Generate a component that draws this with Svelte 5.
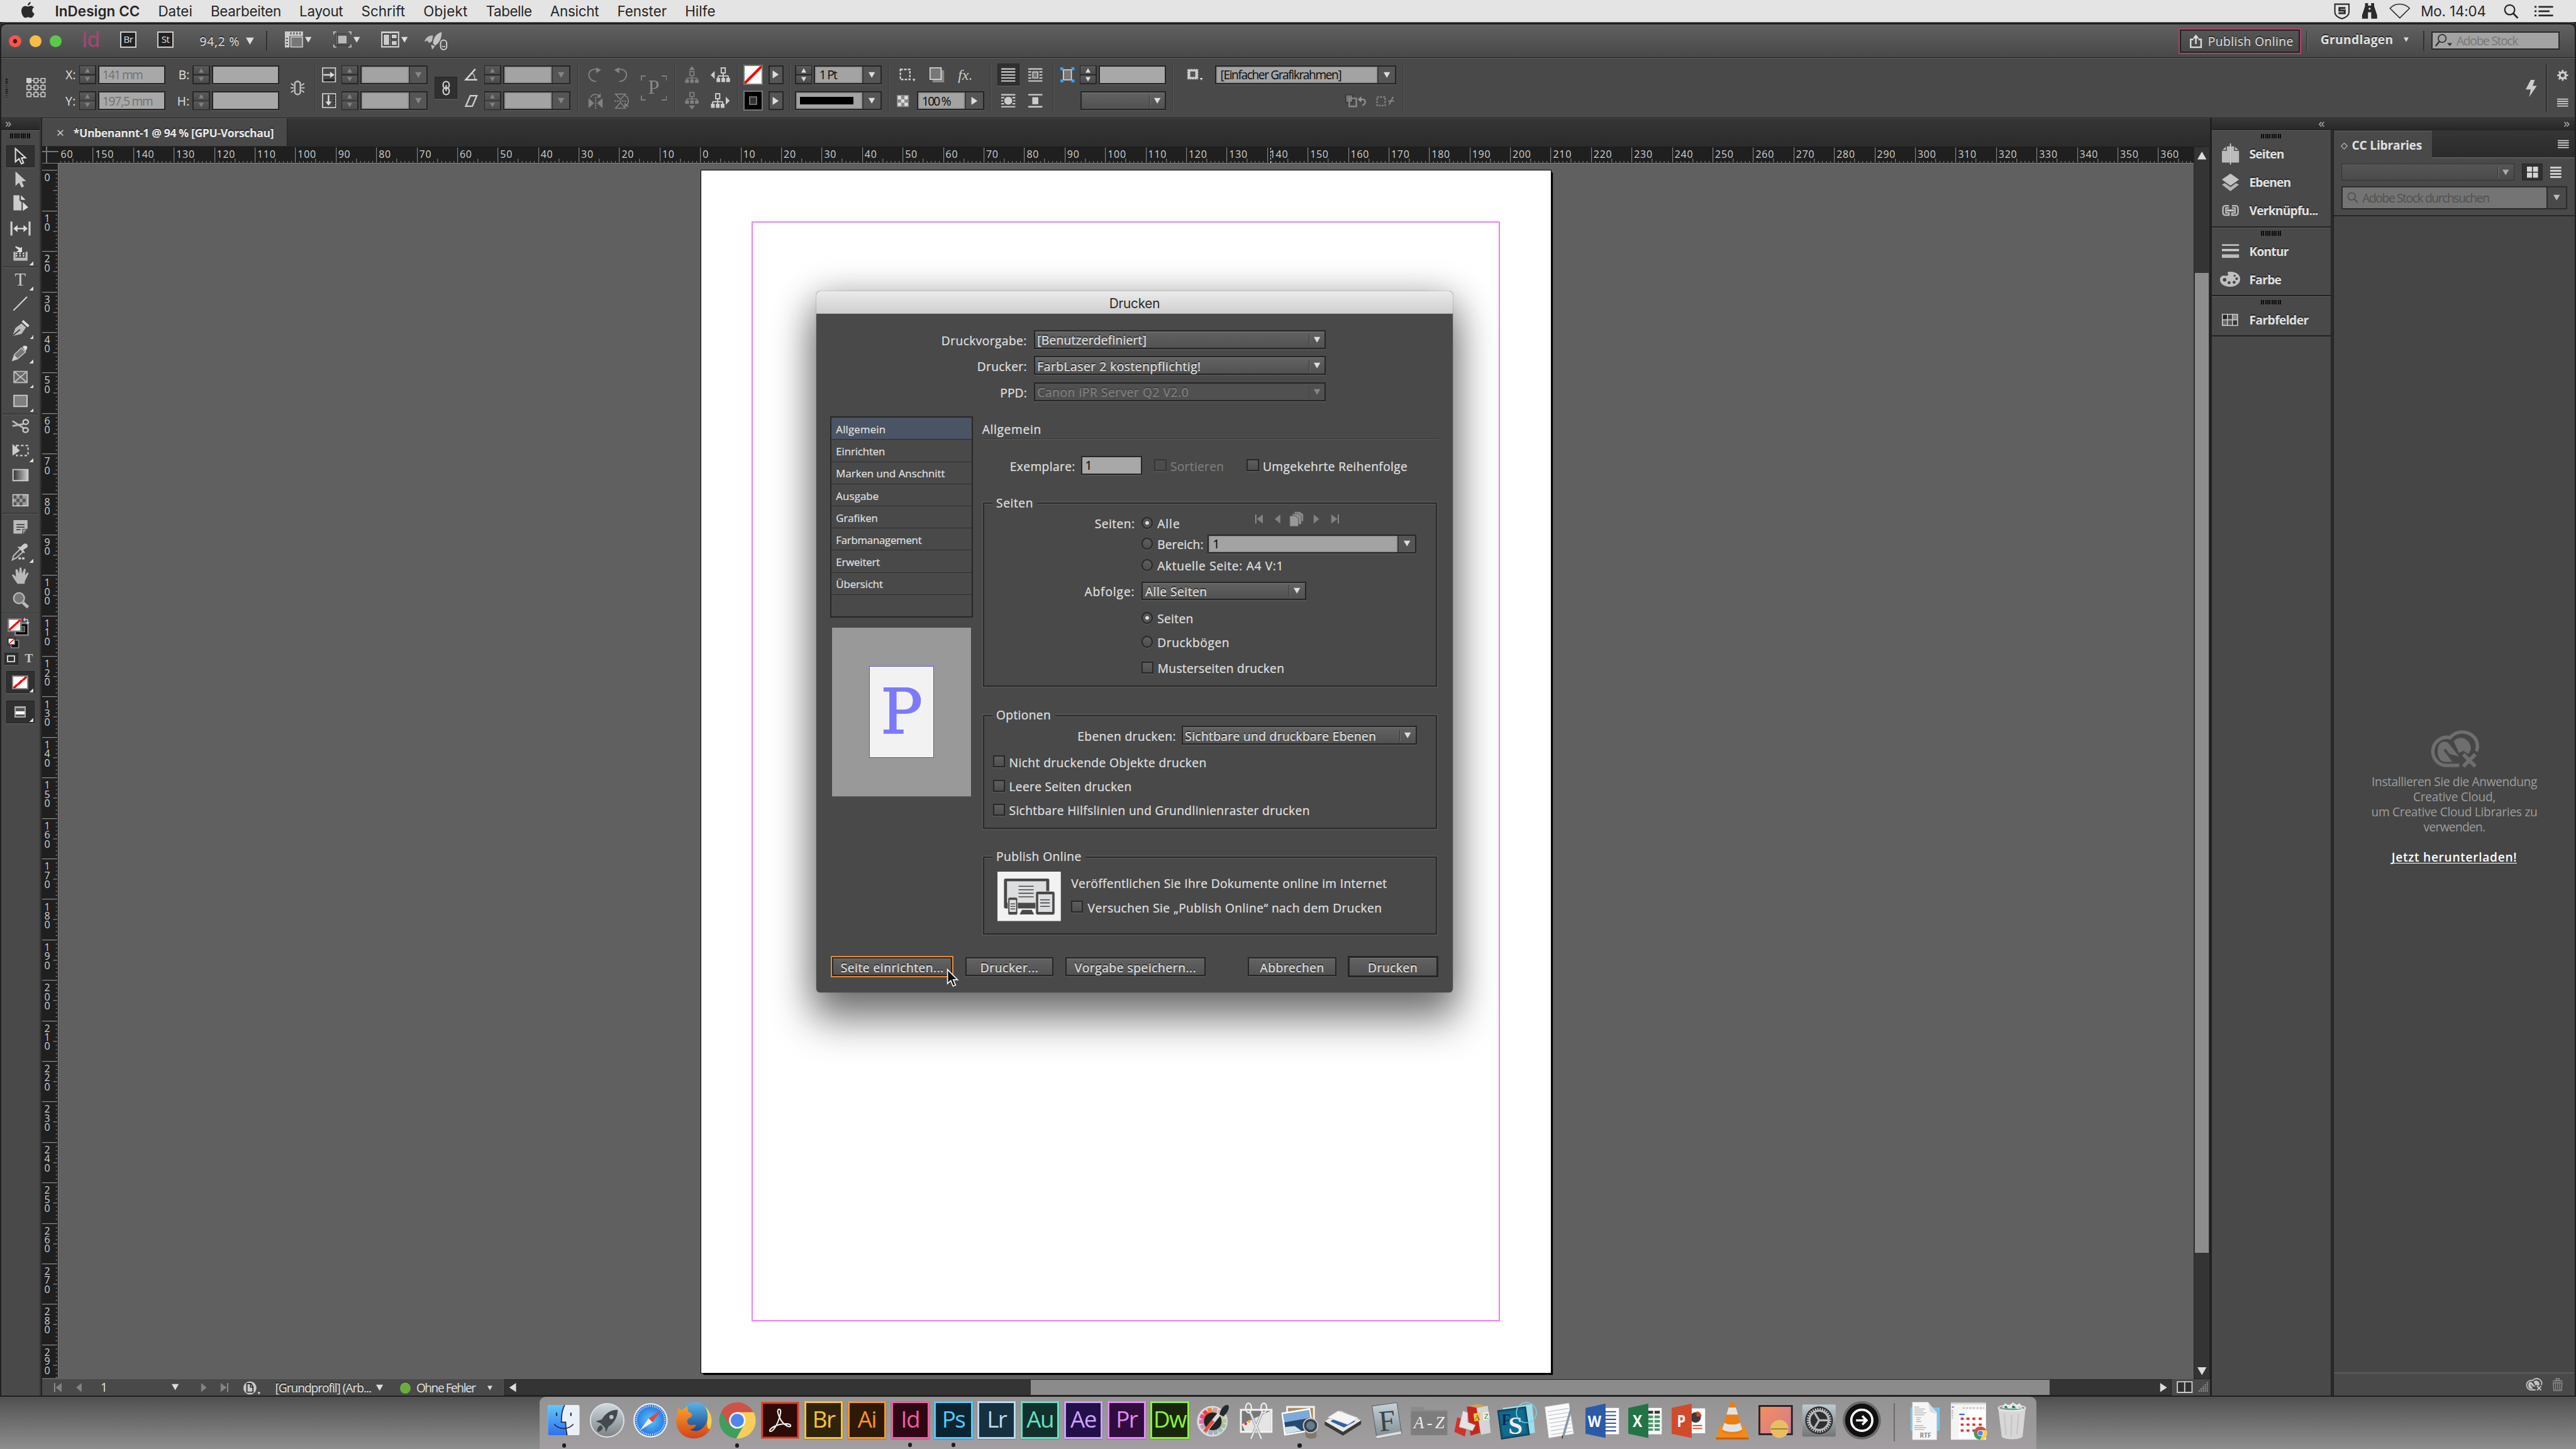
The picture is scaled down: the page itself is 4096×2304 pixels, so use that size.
<script>
  // Spreads a label's letters so that its ink is `width` units wide.
  function fit(node, width) {
    if (!width) return;
    const natural = parseFloat(getComputedStyle(node).width);
    const gaps = node.textContent.length - 1;
    if (gaps > 0) node.style.letterSpacing = `${(width + 1.2 - natural) / gaps}px`;
  }

  const MM10 = 40.25;
  const hMarks = Array.from({ length: 53 }, (_, i) => Math.abs((i - 16) * 10));
  const vMarks = Array.from({ length: 30 }, (_, i) => String(i * 10));
  const hTicks = 'M.4 1V16' + Array.from({ length: 9 }, (_, i) => `M${((i + 1) * 4.025 + 0.4).toFixed(2)} ${i === 4 ? 12 : 14.4}V16`).join('');
  const vTicks = 'M0 .4H15' + Array.from({ length: 9 }, (_, i) => `M${i === 4 ? 11 : 13.5} ${((i + 1) * 4.025 + 0.4).toFixed(2)}H15`).join('');

  const menus = [['Datei', 32.8], ['Bearbeiten', 69], ['Layout', 42.3], ['Schrift', 42.3], ['Objekt', 42.6], ['Tabelle', 44.7], ['Ansicht', 47.4], ['Fenster', 48], ['Hilfe', 29]];
  const sections = [['Allgemein', 48], ['Einrichten', 47.6], ['Marken und Anschnitt', 107], ['Ausgabe', 41.2], ['Grafiken', 40.4], ['Farbmanagement', 84], ['Erweitert', 42.5], ['Übersicht', 45.5]];
  const panelGroups = [
    [['pages', 'Seiten', 33.7], ['layers', 'Ebenen', 40.5], ['links', 'Verknüpfu...', 67.5]],
    [['strokes', 'Kontur', 38.2], ['palette', 'Farbe', 31]],
    [['swatches', 'Farbfelder', 58]]
  ];
  const tools = [
    ['select', 24, 'on'], ['direct', 23], ['pageTool', 24.5], ['gapTool', 25], ['content', 25, 'more'], ['-', 0],
    ['type', 24, 'more'], ['line', 24], ['pen', 24.5, 'more'], ['pencil', 24, 'more'], ['frameX', 24.5, 'more'], ['frame', 24, 'more'], ['-', 0],
    ['scissors', 24], ['transform', 24.5, 'more'], ['gradient', 24], ['feather', 25.5], ['-', 0],
    ['note', 26], ['dropper', 23.5, 'more'], ['hand', 24], ['zoom', 24.5], ['-', 0]
  ];
  const adobe = {
    Br: ['#f7c333', '#30230b'], Ai: ['#f79326', '#2e1906'], Id: ['#ef5da0', '#2d0713'], Ps: ['#4fccfb', '#0a2431'],
    Lr: ['#b9d9f0', '#17303f'], Au: ['#63e0c0', '#12302c'], Ae: ['#cba2f7', '#230f4a'], Pr: ['#e488f8', '#300d3c'], Dw: ['#8bf03c', '#18270c']
  };
  const dock = ['finder', 'launchpad', 'safari', 'firefox', 'chrome', 'acrobat', 'Br', 'Ai', 'Id', 'Ps', 'Lr', 'Au', 'Ae', 'Pr', 'Dw', 'colorPicker', 'grab', 'preview', 'scanner', 'fontbook', 'fonts', 'dictionary', 'fontSync', 'textedit', 'word', 'excel', 'powerpoint', 'vlc', 'amphetamine', 'settings', 'teamviewer'];
  const dockEnd = ['rtf', 'download', 'trashFull'];
  const running = ['finder', 'chrome', 'Id', 'Ps', 'preview'];

  const tri = { d: 'M0 0H8L4 7Z', u: 'M0 7H8L4 0Z', r: 'M0 0V8L6 4Z', l: 'M6 0V8L0 4Z' };
  const spokes = (n, r1, r2, cx = 20, cy = 20) => Array.from({ length: n }, (_, i) => {
    const a = (i * 2 * Math.PI) / n;
    return `M${(cx + r1 * Math.cos(a)).toFixed(2)} ${(cy + r1 * Math.sin(a)).toFixed(2)}L${(cx + r2 * Math.cos(a)).toFixed(2)} ${(cy + r2 * Math.sin(a)).toFixed(2)}`;
  }).join('');
  const ringColors = ['#c9a0a0', '#d7b79b', '#cfc49a', '#b5c4a4', '#a6bda4', '#9fbcb0', '#9fb4b9', '#a3adc0', '#aaa5c0', '#bf9fbb', '#e070a8', '#f0497c', '#ef4444', '#f4823c'];
  const colorRing = ringColors.map((c, i) => {
    const a = (i / 14) * 2 * Math.PI, b = ((i + 0.85) / 14) * 2 * Math.PI;
    return `<path d="M${20 + 12 * Math.sin(a)} ${21 - 12 * Math.cos(a)}L${20 + 12 * Math.sin(b)} ${21 - 12 * Math.cos(b)}" stroke="${c}" stroke-width="5" fill="none"/>`;
  }).join('');
  const chromeBall = '<path d="M20 20L3.5 10.5A19 19 0 0 1 36.8 11.5H20Z" fill="#cf5246"/><path d="M3.3 11A19 19 0 0 0 19 38.9L27 24.5 20 20Z" fill="#3f9d5d"/><path d="M19 39A19 19 0 0 0 37.2 11.5H20L27.4 24Z" fill="#f7cf58"/><path d="M3.3 11L12 26 20 20 20 11.5H37Z" fill="#cf5246"/><circle cx="20" cy="20" r="8.7" fill="#f4f4f4"/><circle cx="20" cy="20" r="6.9" fill="#4f86ec"/>';
  const tree = '<path d="M5 0H9V5H5ZM7 5V8M2 8H12M2 8V10M7 8V10M12 8V10" fill="none" stroke="currentColor" stroke-width="1.2"/><path d="M.3 10H4V14H.3ZM5.2 10H8.9V14H5.2ZM10 10H13.7V14H10Z" fill="currentColor"/>';
  const cloudX = '<path d="M29 35H15A14 14 0 1 1 20 7.5 15 14 0 0 1 46 21" fill="none" stroke="currentColor" stroke-width="3.4"/><path d="M8 21C8 10 17 10 20 16L28 26M15 21L23 31H15C10 31 8 26 8 21M24 11C30 5 40 9 40 19L38 23 33 20 29 22Z" fill="currentColor" stroke="currentColor" stroke-width="1"/><path d="M15 20L24 32" stroke="#494949" stroke-width="2.6" stroke-linecap="round"/><path d="M33 24L45 36M45 24L33 36" stroke="currentColor" stroke-width="3.6"/>';

  // name: [width, height, drawing]
  const icons = {
    apple: [13, 16, '<path d="M9.2 0C9.3 1.7 7.9 3.5 6.3 3.5 6.2 1.8 7.6.2 9.2 0ZM6.6 4.6C7.3 4.6 8.200 3.800 9.700 3.900 10.900 4 11.900 4.500 12.500 5.500 10 7 10.400 10.600 13 11.700 12.300 13.700 10.900 15.800 9.500 15.800 8.300 15.800 8 15.100 6.700 15.100 5.400 15.100 5 15.800 3.900 15.800 2.200 15.800 0 12.200 0 9 0 5.800 2 4 3.900 4 5.100 4 5.900 4.600 6.600 4.600Z" fill="#2b2b2b"/>'],
    shield: [16, 16, '<path d="M1 1H15V9C15 12.500 11.500 14.300 8 15.400 4.500 14.300 1 12.500 1 9Z" fill="none" stroke="#2b2b2b" stroke-width="1.300"/><path d="M11.500 4.800H5.500V7.300H10.800V10H4.600" fill="none" stroke="#2b2b2b" stroke-width="1.900"/>'],
    binoculars: [16, 16, '<path d="M3.500 0H6.500V2.500H9.500V0H12.500V3L15.500 12V15.500H9.600V9H6.400V15.500H.5V12L3.500 3Z" fill="#2b2b2b"/><circle cx="8" cy="5.500" r="1" fill="#e4e4e4"/>'],
    wifi: [21, 16, '<path d="M.8 5.200C6-.5 15-.5 20.200 5.200L10.500 14.800Z" fill="none" stroke="#2b2b2b" stroke-width="1"/>'],
    find: [15, 15, '<circle cx="6" cy="6" r="4.900" fill="none" stroke="currentColor" stroke-width="1.400"/><path d="M9.500 9.500L14 14.200" stroke="currentColor" stroke-width="1.700"/>'],
    notif: [19, 11, '<path d="M0 1.200H2M4 1.200H18.500M0 5.500H2M4 5.500H15M0 9.800H2M4 9.800H18.500" stroke="#2b2b2b" stroke-width="1.700"/>'],
    viewOpts: [18, 16, '<path d="M0 0H18V4.500H4.500V16H0Z" fill="#ccc"/><path d="M6 5.500H17.500V15.500H6Z" fill="#777" stroke="#ccc"/><path d="M6 1V3M9 1V3M12 1V3M15 1V3M1 7H3M1 10H3M1 13H3" stroke="#333"/>'],
    screen: [18, 16, '<path d="M.5 3V.5H3M15 .5H17.500V3M17.500 13V15.500H15M3 15.500H.5V13" fill="none" stroke="#ccc"/><path d="M3 2.500H15V13.500H3Z" fill="#ccc" stroke="#222" stroke-width=".6"/><path d="M4.200 3.500H13.800V12.500H4.200Z" fill="#b9b9b9" stroke="#333"/>'],
    arrange: [18, 16, '<path d="M0 0H18V16H0Z" fill="#ccc"/><path d="M2 2.500H8.500V14H2ZM10 2.500H16V7.500H10ZM10 9H16V14H10Z" fill="#ccc" stroke="#333" stroke-width="1.100"/>'],
    gpu: [23, 18, '<path d="M17 0C11.500 1.500 8.500 6 8.500 11.500L10.500 13.500C15.500 10 17 6 17 0Z" fill="#c4c4c4"/><path d="M8.500 3.500C4 3 1 6 0 9.500L3 8.500 4.500 11 7.500 9Z" fill="#bbb"/><path d="M6.500 12.500L7.500 17.500 10.500 14Z" fill="#bbb"/><rect x="16" y="8" width="6" height="9.500" rx="3" fill="none" stroke="#ccc" stroke-width="1.300"/><path d="M17.500 14.500H20.500" stroke="#ccc"/>'],
    upload: [12, 14, '<path d="M3.500 5.500H.8V13.200H11.200V5.500H8.500M6 10V2" fill="none" stroke="#ddd" stroke-width="1.500"/><path d="M2.800 4.500L6 .5 9.200 4.500Z" fill="#ddd"/>'],
    stockFind: [17, 13, '<circle cx="7" cy="4.500" r="3.900" fill="none" stroke="#333" stroke-width="1.100"/><path d="M4.200 7.500L.5 12" stroke="#333" stroke-width="1.600"/><path d="M12 9H17L14.500 12Z" fill="#333"/>'],
    bolt: [11, 17, '<path d="M5 0H9L7 6H11L3.500 17 5 9.500H0Z" fill="#ccc"/>'],
    gear: [11, 11, `<circle cx="5.500" cy="5.500" r="3" fill="none" stroke="#ccc" stroke-width="2.200"/><path d="${spokes(8, 3.5, 5.5, 5.5, 5.5)}" stroke="#ccc" stroke-width="1.600"/>`],
    menu: [11, 9, '<path d="M0 1H11M0 3.300H11M0 5.600H11M0 7.900H11" stroke="#d0d0d0" stroke-width="1.150"/>'],
    proxy: [19, 19, '<path d="M2.500 2.500H16.500V16.500H2.500ZM9.500 2.500V16.500M2.500 9.500H16.500" fill="none" stroke="#bbb" stroke-width=".8"/><path d="M.5.5H4.500V4.500H.5ZM7.500.5H11.500V4.500H7.500ZM14.500.5H18.500V4.500H14.500ZM.5 7.500H4.500V11.500H.5ZM7.500 7.500H11.500V11.500H7.500ZM14.500 7.500H18.500V11.500H14.500ZM.5 14.500H4.500V18.500H.5ZM7.500 14.500H11.500V18.500H7.500ZM14.500 14.500H18.500V18.500H14.500Z" fill="#494949" stroke="#ccc"/><path d="M0 0H5V5H0Z" fill="#ccc"/>'],
    unlink: [14, 16, '<rect x="4.200" y="1.500" width="5.600" height="13" rx="2.800" fill="none" stroke="#bbb" stroke-width="1.600"/><path d="M0 8H3M11 8H14M.5 3.500L3 5.500M13.500 3.500L11 5.500M.5 12.500L3 10.500M13.500 12.500L11 10.500" stroke="#ddd"/>'],
    chain: [8, 15, '<rect x="1" y="1" width="6" height="7" rx="3" fill="none" stroke="#ccc" stroke-width="1.400"/><rect x="1" y="7" width="6" height="7" rx="3" fill="none" stroke="#ccc" stroke-width="1.400"/><path d="M4 4.500V10.500" stroke="#ccc" stroke-width="1.400"/>'],
    scaleX: [14, 15, '<path d="M.6 .6H13.400V14.400H.6Z" fill="none" stroke="#ddd"/><path d="M2 13H12.500" stroke="#222" stroke-width="2"/><path d="M1.500 7.500H8" stroke="#ddd" stroke-width="1.500"/><path d="M8 4.500L12.500 7.500 8 10.500Z" fill="#ddd"/>'],
    scaleY: [14, 15, '<path d="M.6 .6H13.400V14.400H.6Z" fill="none" stroke="#ddd"/><path d="M12.500 2V13" stroke="#222" stroke-width="1.500" stroke-dasharray="1.500 1"/><path d="M6.500 2V9" stroke="#ddd" stroke-width="1.500"/><path d="M3.500 8.500L6.500 12.500 9.500 8.500Z" fill="#ddd"/>'],
    angle: [13, 12, '<path d="M10.500 .5L1 11.200H12.500" fill="none" stroke="#ddd" stroke-width="1.500"/><path d="M7.500 4.500C9.500 6 10 8 10 11" fill="none" stroke="#bbb"/>'],
    shear: [13, 12, '<path d="M5.500 .8H12L7.500 11.200H1Z" fill="none" stroke="#ccc" stroke-width="1.500"/>'],
    rotR: [14, 15, '<path d="M8 14C3 14 .8 10.500 .8 7.500 .8 4 3.500 1.500 8 2" fill="none" stroke="#828282" stroke-width="1.200"/><path d="M8 0L13 2.700 8 6Z" fill="#828282"/>'],
    rotL: [14, 15, '<path d="M6 14C11 14 13.200 10.500 13.200 7.500 13.200 4 10.500 1.500 6 2" fill="none" stroke="#828282" stroke-width="1.200"/><path d="M6 0L1 2.700 6 6Z" fill="#828282"/>'],
    flipH: [15, 16, '<path d="M.5 5L6 10 .5 15ZM14.500 5L9 10 14.500 15Z" fill="#828282"/><path d="M7.500 4V16" stroke="#999" stroke-dasharray="1.500 1"/><path d="M2.500 4.500C4 .5 9 .5 11 3" fill="none" stroke="#828282"/><path d="M12.500 0V4.500H8.500Z" fill="#828282"/>'],
    flipV: [15, 16, '<path d="M1 1H11L6 6.500ZM1 15H11L6 9.500Z" fill="none" stroke="#828282"/><path d="M0 8H12" stroke="#999" stroke-dasharray="1.500 1"/><path d="M10.500 2.500C14.500 4 14.500 9 12.500 12" fill="none" stroke="#828282"/><path d="M14.500 13.500H10V9.500Z" fill="#828282"/>'],
    treeUp: [14, 17, `<path d="M7 0L10 4H4Z" fill="currentColor"/><g transform="translate(0 5.500) scale(1 .8)">${tree}</g>`],
    treeDown: [14, 17, `<g transform="scale(1 .8)">${tree}</g><path d="M7 17L10 13H4Z" fill="currentColor"/>`],
    treeLeft: [19, 14, `<path d="M0 7L4 3V11Z" fill="#ccc"/><g transform="translate(5.500)">${tree}</g>`],
    treeRight: [19, 14, `<g>${tree}</g><path d="M19 7L15 3V11Z" fill="#ccc"/>`],
    corners: [16, 14, '<path d="M1 1.500H10.500V11.500H1Z" fill="none" stroke="#ddd" stroke-width="1.300" stroke-dasharray="2.500 1.200"/><path d="M13 11H16L14.500 13.500Z" fill="#ddd"/>'],
    shadow: [15, 15, '<path d="M3 3H14.500V15H3Z" fill="#888"/><path d="M.5.5H11.500V12H.5Z" fill="#777" stroke="#ddd"/>'],
    opacity: [12, 12, '<path d="M0 0H12V12H0Z" fill="#888"/><path d="M1 1H4.300V4.300H1ZM7.600 1H11V4.300H7.600ZM4.300 4.300H7.600V7.600H4.300ZM1 7.600H4.300V11H1ZM7.600 7.600H11V11H7.600Z" fill="#ddd"/>'],
    wrapNone: [14, 14, '<path d="M0 1H14M0 4H14M0 7H14M0 10H14M0 13H14" stroke="#ccc" stroke-width="1.300"/>'],
    wrapBox: [14, 14, '<path d="M0 1H14M0 4H3M11 4H14M0 7H3M11 7H14M0 10H3M11 10H14M0 13H14" stroke="#ccc" stroke-width="1.300"/><path d="M4.500 4H9.500V10H4.500Z" fill="#777" stroke="#ccc"/>'],
    wrapShape: [14, 14, '<path d="M0 1H14M0 4H3M11 4H14M0 7H2M12 7H14M0 10H3M11 10H14M0 13H14" stroke="#ccc" stroke-width="1.300"/><circle cx="7" cy="7" r="4.300" fill="#ccc" stroke="#333" stroke-width=".6"/>'],
    wrapJump: [14, 14, '<path d="M0 1H14M0 13H14" stroke="#ccc" stroke-width="1.500"/><path d="M4 3.500H10V10.500H4Z" fill="#ccc"/>'],
    fitFrame: [14, 15, '<path d="M3 2.500H11V12.500H3Z" fill="#777" stroke="#ddd"/><path d="M0 0H3V3H0ZM11 0H14V3H11ZM0 12H3V15H0ZM11 12H14V15H11Z" fill="#3ea0f5"/>'],
    frameStyle: [16, 13, '<path d="M.5 1H11.500V11.500H.5Z" fill="#ccc"/><path d="M.5 1H11.500V11.500H.5Z" fill="none" stroke="#444" stroke-dasharray="1 1.500"/><path d="M3.500 3.500H8.500V9H3.500Z" fill="#555"/><path d="M13 10H16L14.500 12.500Z" fill="#ddd"/>'],
    clearA: [21, 13, '<path d="M.5.5H7.500V8H.5Z" fill="#777" stroke="#333"/><path d="M4 4H11V12H4Z" fill="none" stroke="#888" stroke-width="1.500"/><path d="M14 5H18C20.500 5.500 20.500 10 17 11" fill="none" stroke="#999" stroke-width="1.300"/><path d="M12.500 5L16 2V8Z" fill="#999"/>'],
    clearB: [18, 12, '<path d="M1 2H9V10.500H1Z" fill="none" stroke="#888" stroke-width="1.300" stroke-dasharray="2 1"/><path d="M12 6H18M13 9.500L17 2" stroke="#888" stroke-width="1.200"/>'],
    select: [22, 18, '<path d="M6 1.500V14.500L9.500 11.500 12 16.500 14 15.500 12 10.800 16 10.500Z" fill="none" stroke="#ddd" stroke-width="1.300"/>'],
    direct: [22, 18, '<path d="M6 1V15.500L9.500 12 12 17 14.500 16 12.300 11 16.500 10.500Z" fill="#c8c8c8"/>'],
    pageTool: [22, 18, '<path d="M4 1H10V6L12 8V16H4Z" fill="#ccc"/><path d="M11.500 1L16 5.500H11.500Z" fill="#ddd"/><path d="M13 7V17L19 13Z" fill="#ddd" stroke="#333" stroke-width=".5"/>'],
    gapTool: [22, 18, '<path d="M1 2H3V16H1ZM19 2H21V16H19Z" fill="#ccc"/><path d="M6 9H16" stroke="#ddd" stroke-width="1.400"/><path d="M4 9L8 5.500V12.500ZM18 9L14 5.500V12.500Z" fill="#ddd"/>'],
    content: [22, 18, '<path d="M4 7V16H18V7H16V13H6V7Z" fill="#bbb"/><path d="M7 8V12M10.500 8V12M14 8V12" stroke="#ddd" stroke-width="1.500" stroke-dasharray="1.500 .8"/><path d="M6 2L12 4V2.500L12 7H8L10 5.500Z" fill="#ddd" stroke="#ddd"/>'],
    line: [22, 18, '<path d="M4 16L17.500 2.500" stroke="#ddd" stroke-width="1.200"/>'],
    pen: [22, 18, '<path d="M3 17L6 9 12 4.500 16.500 8.500 12 15 3 17Z" fill="#bbb"/><path d="M3.500 16.500L10.500 10.500" stroke="#333" stroke-width="1.100"/><path d="M13 2L19 7.500" stroke="#ddd" stroke-width="2.400"/>'],
    pencil: [22, 18, '<path d="M3 17L5 11 12 4.500 16 8.500 8 15.500Z" fill="#777" stroke="#bbb"/><path d="M13 3.500C15 1 19 3 17.500 5L16 8Z" fill="#ddd"/><path d="M3 17L5 11.500 8 15Z" fill="#ccc"/>'],
    frameX: [22, 18, '<path d="M4.500 3.500H17.500V14.500H4.500ZM4.500 3.500L17.500 14.500M17.500 3.500L4.500 14.500" fill="#666" stroke="#bbb" stroke-width="1.200"/>'],
    frame: [22, 18, '<path d="M4.500 3.500H17.500V14.500H4.500Z" fill="#808080" stroke="#ccc" stroke-width="1.200"/>'],
    scissors: [22, 18, '<path d="M3 4L14 11M3 9L14 7" stroke="#bbb" stroke-width="1.700"/><ellipse cx="16.200" cy="5" rx="2.600" ry="2.300" fill="none" stroke="#ccc" stroke-width="1.400"/><ellipse cx="16" cy="13" rx="2.600" ry="2.300" fill="none" stroke="#ccc" stroke-width="1.400"/>'],
    transform: [22, 18, '<path d="M7 4H18.500V14H7Z" fill="none" stroke="#ccc" stroke-width="1.300" stroke-dasharray="2.500 2"/><path d="M3 2.500V14L10.500 9Z" fill="#ccc"/>'],
    gradient: [22, 18, '<defs><linearGradient id="gr"><stop stop-color="#333"/><stop offset="1" stop-color="#ccc"/></linearGradient></defs><path d="M3.600 3.500H18.400V14.500H3.600Z" fill="url(#gr)" stroke="#ccc" stroke-width="1.200"/>'],
    feather: [22, 18, '<path d="M3.600 3.500H18.400V14.500H3.600Z" fill="#999" stroke="#ccc" stroke-width="1.200"/><path d="M4 4H7V7.500H4ZM10 4H13V7.500H10ZM7 7.500H10V11H7ZM13 7.500H16V11H13ZM4 11H7V14H4ZM10 11H13V14H10Z" fill="#555"/>'],
    note: [22, 18, '<path d="M4 2.500H18V11L14 16H4Z" fill="#bbb"/><path d="M7 7H15M7 9.500H15M7 12H11" stroke="#333"/><path d="M13 11.500H18L13 16Z" fill="#999" stroke="#333" stroke-width=".5"/>'],
    dropper: [22, 18, '<path d="M3 17L4 13 11 6 13.500 9 7 15Z" fill="none" stroke="#bbb" stroke-width="1.300"/><path d="M9 4.500L15 10 13 7 17.500 4C18 1.500 16 .5 14 2L11.500 4.500Z" fill="#ccc" stroke="#ccc"/><path d="M9 15.500H16" stroke="#ccc" stroke-width="2" stroke-dasharray="2.500 1"/>'],
    hand: [22, 18, '<path d="M8 17L4.500 12 2.500 8.500C3 7 5 8.500 6.500 10L6 3.500C6.500 2 8 2 8.500 4L9.500 7 10 1.500C10.500.5 12 .5 12 2L12.500 7 14.500 2.500C15.500 1.500 16.500 2.500 16 4L15.500 8.500 17.500 6C19 5.500 19.500 6.500 18.500 8L15.500 14 15 17Z" fill="#b8b8b8"/>'],
    zoom: [22, 18, '<circle cx="9.500" cy="7" r="5.300" fill="#777" stroke="#bbb" stroke-width="1.400"/><path d="M13.500 11.500L18.500 16" stroke="#bbb" stroke-width="3"/>'],
    pages: [17, 22, '<path d="M0 7L4.500 3H8V19H0ZM9 3H12.500L17 7V19H9Z" fill="#bbb"/><path d="M4.500 3V7H0M12.500 3V7H17" fill="none" stroke="#333" stroke-width=".8"/><path d="M8.500 0V21" stroke="#ddd"/>'],
    layers: [17, 18, '<path d="M8.500 0L17 6 8.500 12 0 6Z" fill="#c4c4c4"/><path d="M0 11L3 9.500 8.500 13.500 14 9.500 17 11 8.500 17.500Z" fill="#b5b5b5"/>'],
    links: [17, 12, '<path d="M7 1.300H3.500C2 1.300 1 2.500 1 4V8C1 9.500 2 10.700 3.500 10.700H7V8.500H4V3.500H7M10 1.300H13.500C15 1.300 16 2.500 16 4V8C16 9.500 15 10.700 13.500 10.700H10V8.500H13V3.500H10" fill="none" stroke="#bbb" stroke-width="1.500"/><path d="M5 6H12" stroke="#ccc" stroke-width="1.800"/>'],
    strokes: [17, 14, '<path d="M0 1H17" stroke="#ccc" stroke-width="1.500"/><path d="M0 6H17" stroke="#ccc" stroke-width="2.200"/><path d="M0 12H17" stroke="#bbb" stroke-width="3.500"/>'],
    palette: [20, 15, '<path d="M10 0C16 0 20 3 20 7.500S15 15 10 15C4 15 0 12 0 8 0 5 2 3.500 5 4 8 4.500 9 3 7.500 1.500 7 .5 8.500 0 10 0Z" fill="#c0c0c0"/><circle cx="4.500" cy="8" r="1.800" fill="#444"/><circle cx="9" cy="11" r="1.500" fill="#444"/><circle cx="14" cy="10.500" r="1.500" fill="#444"/><circle cx="16.500" cy="7" r="1.300" fill="#444"/><circle cx="14.500" cy="4" r="1" fill="#444"/>'],
    swatches: [16, 12, '<path d="M.5.5H15.500V11.500H.5Z" fill="#666" stroke="#ccc"/><path d="M1 1H5V5.500H1Z" fill="#222"/><path d="M6 1H10V5.500H6Z" fill="#444"/><path d="M6 6.500H10V11H6Z" fill="#555"/><path d="M11 6.500H15V11H11Z" fill="#333"/><path d="M11 1H15V5.500H11Z" fill="#888"/><path d="M5.500 .5V11.500M10.500 .5V11.500M.5 6H15.500" stroke="#ccc" stroke-width=".9"/>'],
    grid: [11, 11, '<path d="M0 0H5V5H0ZM6 0H11V5H6ZM0 6H5V11H0ZM6 6H11V11H6Z" fill="#d5d5d5"/>'],
    list: [11, 11, '<path d="M0 1H11M0 4.100H11M0 7.200H11M0 10.300H11" stroke="#ccc" stroke-width="1.900"/>'],
    cc: [48, 38, cloudX],
    bin: [11, 13, '<path d="M0 3.500C1 1.500 10 1.500 11 3.500Z" fill="#8a8a8a"/><path d="M4 2V.6H7V2" fill="none" stroke="#8a8a8a"/><path d="M1.200 4.800H9.800L9.300 12.500H1.700Z" fill="none" stroke="#8a8a8a"/><path d="M3.500 5V12M5.500 5V12M7.500 5V12" stroke="#8a8a8a" stroke-width=".8"/>'],
    first: [8, 9, '<path d="M.5 0V9" stroke="#999"/><path d="M7.500 0V9L1.500 4.500Z" fill="#828282"/>'],
    prev: [6, 9, '<path d="M5.500 0V9L0 4.500Z" fill="#828282"/>'],
    next: [6, 9, '<path d="M.5 0V9L6 4.500Z" fill="#828282"/>'],
    last: [8, 9, '<path d="M7.500 0V9" stroke="#999"/><path d="M.5 0V9L6.500 4.500Z" fill="#828282"/>'],
    sheets: [15, 15, '<path d="M5 .5H10.500L14 3V10H5Z" fill="#8e8e8e" stroke="#555" stroke-width=".6"/><path d="M3 2.500H9L12 5V13H3Z" fill="#8e8e8e" stroke="#555" stroke-width=".6"/><path d="M.5 4.500H6L9 7V15H.5Z" fill="#999" stroke="#555" stroke-width=".6"/>'],
    docCircle: [17, 14, '<circle cx="6.500" cy="6.800" r="6.500" fill="#c8c8c8"/><path d="M3.500 2.500H7.500L9.500 5.500V11H3.500Z" fill="none" stroke="#333" stroke-width="1.200"/><path d="M7 2.500V6H9.500" fill="none" stroke="#333"/><path d="M14 11H17L15.500 13.500Z" fill="#ddd"/>'],
    split: [16, 12, '<path d="M.7 .7H15.300V11.300H.7ZM8 .7V11.300" fill="#303030" stroke="#ccc" stroke-width="1.200"/>'],
    sizer: [9, 10, '<path d="M.5 8V10M2.500 6V10M4.500 4V10M6.500 2V10M8.500 0V10" stroke="#bbb" stroke-dasharray="1 1"/>'],
    cursor: [12, 19, '<path d="M1 1V15L4.200 12 6.500 17.500 9 16.500 6.700 11.200H11Z" fill="#111" stroke="#fff" stroke-width="1"/>'],
    devices: [63, 49, '<path d="M0 0H63V49H0Z" fill="#f2f2f2"/><path d="M6.500 8.500C6.500 7.500 7 6.800 8 6.800H50C51 6.800 51.500 7.500 51.500 8.500V34C51.500 36 51 36.500 50 36.500H8C7 36.500 6.500 36 6.500 35Z" fill="#484848"/><path d="M9.500 9.500H48.500V31H9.500Z" fill="#dcdddf"/><path d="M21 14.500H36M21 18H36M21 21.500H36M21 25H36" stroke="#484848"/><path d="M24.500 38H34L36.500 42.500H22Z" fill="#484848"/><rect x="38" y="19.500" width="19" height="23.500" rx="2" fill="#484848" stroke="#f2f2f2" stroke-width=".5"/><path d="M40.500 22.500H54.500V40H40.500Z" fill="#dcdddf"/><path d="M42.500 28H52M42.500 31H52M42.500 34.500H52" stroke="#484848"/><rect x="10.500" y="25.500" width="9.500" height="17.500" rx="1.500" fill="#484848" stroke="#f2f2f2" stroke-width=".5"/><path d="M12 28H18.500V40H12Z" fill="#dcdddf"/><path d="M13 32H17.500M13 34.500H17.500M13 37H17.500" stroke="#484848" stroke-width=".9"/>'],
    finder: [40, 40, '<defs><linearGradient id="fi" x2="0" y2="1"><stop stop-color="#5fc8fa"/><stop offset="1" stop-color="#3170ee"/></linearGradient></defs><rect x="3.500" y="4" width="33" height="31.500" rx="1.500" fill="#eaf0f8"/><path d="M5 4H21C18 9 17.500 15 17.500 22H22C22 27 22.500 31 23.500 35.500H5C4 35.500 3.500 35 3.500 34V5.500C3.500 4.500 4 4 5 4Z" fill="url(#fi)"/><path d="M12.500 12V15.500M27.500 12V15.500" stroke="#1b2b45" stroke-width="1.400"/><path d="M10 24C15 30 25 30 30 24M21 4C18 9 17.500 15 17.500 22H22C22 27 22.500 31 23.500 35.500" fill="none" stroke="#1b2b45" stroke-width="1.100"/>'],
    launchpad: [40, 40, '<defs><linearGradient id="la" x2="0" y2="1"><stop stop-color="#cfd9e0"/><stop offset="1" stop-color="#7c8284"/></linearGradient></defs><circle cx="20" cy="20" r="17.500" fill="url(#la)" stroke="#dfe3e6" stroke-width="1.200"/><path d="M31 9C23 9 18 13 14.500 19L8 21 13 23 18 28 18.500 32.500 21.500 26.500C27 23 31 17 31 9ZM10 32C9 29 11 26 13.500 25L15.500 27.500C15 30 13 32 10 32Z" fill="#44494e"/><circle cx="24.500" cy="16.500" r="2.200" fill="#b7c1c7"/>'],
    safari: [40, 40, `<defs><radialGradient id="sa"><stop stop-color="#5cc9f5"/><stop offset="1" stop-color="#2372e4"/></radialGradient></defs><circle cx="20" cy="20" r="18" fill="#eee"/><circle cx="20" cy="20" r="16.500" fill="url(#sa)"/><path d="${spokes(48, 14, 16, 20, 20)}" stroke="#d9ecff" stroke-width=".7"/><path d="M31 9.500L22 22 18 18Z" fill="#e8453c"/><path d="M9 30.500L22 22 18 18Z" fill="#f0f0f0"/>`],
    firefox: [40, 40, '<defs><linearGradient id="ff" x2="0" y2="1"><stop stop-color="#f9a12d"/><stop offset="1" stop-color="#d2421e"/></linearGradient><linearGradient id="fb" x2="0" y2="1"><stop stop-color="#5bb5ea"/><stop offset="1" stop-color="#123a7c"/></linearGradient></defs><circle cx="21" cy="18" r="17" fill="url(#fb)"/><path d="M4 5C4 8 5 9 7 9L13 5 14 11C18 12 19 14 17 17 13 18 12 20 14 24 17 26 20 24 22 25 21 29 16 30 15 29 22 34 31 30 34 20 35 14 34 9 32 6 38 11 40 21 38 27 35 35 28 39 20 39 9 39 2 31 1.500 22 1.300 15 3 12 4 5Z" fill="url(#ff)"/><path d="M31 5C39 12 40 21 37 29 35 29 33 28 34 20 35 14 34 9 31 5Z" fill="#f8d34a"/>'],
    chrome: [40, 40, chromeBall],
    acrobat: [40, 40, '<path d="M.2.800H39.800V39.200H.2Z" fill="#e43a1e"/><path d="M2.200 2.800H37.800V37.200H2.200Z" fill="#2c0a07"/><path d="M18.500 8.500C22 7.500 20.500 15 18 21 15 28 12 32 9.500 31.500 7.500 30 13 26 19 24.500 26 23 31.500 23.500 31 26 30 28 24 25 21 20 18 15 16.500 9.500 18.500 8.500Z" fill="none" stroke="#eee" stroke-width="1.400"/>'],
    colorPicker: [40, 40, `<circle cx="19.500" cy="21" r="16" fill="#ddd"/><circle cx="20" cy="21" r="9.500" fill="#262626"/>${colorRing}<circle cx="20" cy="21" r="8.500" fill="#222"/><path d="M14 29L27 13" stroke="#d8dcdf" stroke-width="4"/><path d="M11.500 31.500L20.500 20.500" stroke="#e8503c" stroke-width="3.500"/><path d="M27 14C28 8 32 3 36 4 38 6 36 12 31 16Z" fill="#202a35"/>`],
    grab: [40, 40, '<path d="M3 8H37V33H3Z" fill="#f2f2f2"/><path d="M5 10H35V31H5Z" fill="#777"/><path d="M35 10V31H8L5 24Z" fill="#e5e5e5"/><circle cx="9" cy="23.500" r="1.500" fill="#d33"/><circle cx="12.500" cy="21" r="1.500" fill="#ea3"/><circle cx="16" cy="18.500" r="1.500" fill="#4a4"/><path d="M13.500 11L25.500 39.500M26.500 11L14.500 39.500" stroke="#888" stroke-width="2.800"/><path d="M13.500 11L25.500 39.500M26.500 11L14.500 39.500" stroke="#e4e4e4" stroke-width="1.800"/><ellipse cx="12" cy="7" rx="3" ry="5" fill="none" stroke="#eee" stroke-width="1.500"/><ellipse cx="28" cy="7" rx="3" ry="5" fill="none" stroke="#eee" stroke-width="1.500"/>'],
    preview: [40, 40, '<path d="M6 5H36V30H6Z" fill="#eee"/><path d="M8 7H34V20H8Z" fill="#a98b58"/><path d="M1 12L31 7 35 31 4 36Z" fill="#fff"/><path d="M2.500 13.500L30 9 31.500 18 4 22Z" fill="#7ea9dc"/><path d="M4 22L31.500 17.500 33 29.500 6 34Z" fill="#27496f"/><path d="M5 27L15 26 22 31 6 34Z" fill="#cfdfe8"/><path d="M25 28L37 28 38 37C36 40 28 40 26.500 37Z" fill="#82776a"/><circle cx="31.500" cy="25.500" r="7.500" fill="#3a4148" stroke="#c8c8c8" stroke-width="1.200"/><circle cx="31.500" cy="25.500" r="4.500" fill="#667b8e"/>'],
    scanner: [40, 40, '<path d="M1 21L18 10 39 20 20 32Z" fill="#e8e8e8"/><path d="M1 21L20 32V36L1 25ZM39 20L20 32V36L39 24Z" fill="#3a3a3a"/><path d="M7 21L17 14 33 21 21 27.500Z" fill="#31609f"/><path d="M4 17L15 10 36 17.500 25 24.500Z" fill="#f4f4f4" stroke="#bbb" stroke-width=".5"/>'],
    fontbook: [40, 40, '<defs><linearGradient id="fo" x2="0" y2="1"><stop stop-color="#c8d3d9"/><stop offset="1" stop-color="#7f8b91"/></linearGradient></defs><path d="M5 5L31 1.500 36 34 10 39Z" fill="url(#fo)" stroke="#59636a" stroke-width=".7"/><path d="M9 36.500L35 31.500 36 34 10 39Z" fill="#ddd"/><text x="12" y="31" font-family="Liberation Serif" font-size="31" fill="#3a4348" transform="rotate(-5 20 20)">F</text>'],
    fonts: [40, 40, '<path d="M1 6H13L16 9H39V35.500H1Z" fill="#8b8b8b"/><path d="M1 10.500H39V35.500H1Z" fill="#7d7d7d"/><text x="4" y="28.500" font-family="Liberation Serif" font-style="italic" font-size="17.500" fill="#eee" textLength="32">A-Z</text>'],
    dictionary: [40, 40, '<path d="M14 6L24 4 28 33 18 36Z" fill="#c9241c"/><path d="M24 6L36 5 39 33 29 35Z" fill="#d5d5d5"/><path d="M15 5L25 3 36 5 25 7Z" fill="#caa25c"/><path d="M21 13L28 12V20L22 21Z" fill="#f0cf45"/><path d="M31 12L37 11 38 19 31.500 20Z" fill="#f1f1e3"/><text x="22" y="19.500" font-family="Liberation Serif" font-size="8" fill="#a11">A</text><text x="32" y="18.500" font-family="Liberation Serif" font-size="8" fill="#284">Z</text><path d="M1 32L4 17 15 20 12 37Z" fill="#d3322a"/><path d="M10 10L15 12V22L23 25 20 31 6 27Z" fill="#e3e3e3" stroke="#aaa" stroke-width=".5"/>'],
    fontSync: [40, 40, '<path d="M6 7L37 3 40 33 10 37Z" fill="#9fdcec"/><path d="M1 10L30 6 34 35 5 39.500Z" fill="#165a78" stroke="#0d3547"/><path d="M3 12L28 8.500 31 33 7 37Z" fill="#0f6d92"/><text x="5" y="25" font-family="Liberation Serif" font-weight="bold" font-size="16" fill="#0c2a55">F</text><text x="12" y="34" font-family="Liberation Serif" font-weight="bold" font-size="27" fill="#eee">S</text><circle cx="31" cy="12" r="10.500" fill="none" stroke="#7ad3ea"/>'],
    textedit: [40, 40, '<path d="M5 6L30 2 35 34 9 38.500Z" fill="#fafafa" stroke="#ccc" stroke-width=".5"/><path d="M8 11L30 7.500M8.600 15L31 11.500M9.200 19L31.500 15.500M9.800 23L32 19.500M10.400 27L32.500 23.500M11 31L33 27.500M11.500 35L33.500 31.500" stroke="#b9bec6" stroke-width=".7"/><path d="M34 2L24 37" stroke="#8a97a5" stroke-width="2.400"/><path d="M23.500 36L23 39" stroke="#333"/>'],
    word: [40, 40, '<path d="M20 7H37V34.500H20Z" fill="#fff"/><path d="M22 11H34M22 15H34M22 19H34M22 23H34M22 27H34M22 31H34" stroke="#3c5a94" stroke-width="1.400"/><path d="M2 7L23 2.500V38.500L2 34Z" fill="#2b5ba8"/><text x="4.500" y="27" font-family="Open Sans" font-weight="bold" font-size="17" fill="#fff" textLength="14" lengthAdjust="spacingAndGlyphs">W</text>'],
    excel: [40, 40, '<path d="M20 7H37V34.500H20Z" fill="#fff"/><path d="M22 10H28V13H22ZM29.500 10H35V13H29.500Z" fill="#333"/><path d="M22 15H28V18H22ZM29.500 15H35V18H29.500ZM22 19.500H28V22.500H22ZM29.500 19.500H35V22.500H29.500ZM22 24H28V27H22ZM29.500 24H35V27H29.500ZM22 28.500H28V31H22ZM29.500 28.500H35V31H29.500Z" fill="#4e9468"/><path d="M2 7L23 2.500V38.500L2 34Z" fill="#227447"/><text x="6.500" y="27" font-family="Open Sans" font-weight="bold" font-size="18" fill="#fff" textLength="10" lengthAdjust="spacingAndGlyphs">X</text>'],
    powerpoint: [40, 40, '<path d="M20 7.500H37V33.500H20Z" fill="#fff"/><circle cx="27" cy="17" r="5.500" fill="#3a3a3a"/><path d="M28 16V10.500A6 6 0 0 1 33.500 16Z" fill="#d24726"/><path d="M24 25.500H34M24 28.500H34" stroke="#d24726" stroke-width="1.200"/><path d="M2 7L23 2.500V38.500L2 34Z" fill="#d24a2c"/><text x="7.500" y="27" font-family="Open Sans" font-weight="bold" font-size="18" fill="#fff" textLength="9" lengthAdjust="spacingAndGlyphs">P</text>'],
    vlc: [40, 40, '<path d="M7 25.500H33L37 38V40H3V38Z" fill="#f08a1d"/><path d="M3 38H37V40H3Z" fill="#c55d0c"/><path d="M18 1H22L31 31C28 36 12 36 9 31Z" fill="#ee7d13"/><path d="M16.200 6.500H23.800L26 14H14ZM11.800 22.500C15 25 25 25 28.200 22.500L30.500 29.500C26 33 14 33 9.500 29.500Z" fill="#dfe3e7"/>'],
    amphetamine: [40, 40, '<defs><linearGradient id="am" x1="0" y1="0" x2="1" y2="1"><stop stop-color="#f58f5a"/><stop offset="1" stop-color="#d07a94"/></linearGradient></defs><path d="M1.500 3.500H38.500V36H1.500Z" fill="#26282b" stroke="#9a9da0"/><path d="M4 6H36V33.500H4Z" fill="url(#am)"/><circle cx="24" cy="29" r="9.500" fill="#e7bf62"/><path d="M15 29H33" stroke="#9d7a30" stroke-width="1.200"/>'],
    settings: [40, 40, `<defs><linearGradient id="se" x2="0" y2="1"><stop stop-color="#bccbd3"/><stop offset="1" stop-color="#727577"/></linearGradient></defs><rect x="2.500" y="3.500" width="35" height="33.500" rx="1.500" fill="url(#se)"/><circle cx="20" cy="20" r="14.500" fill="#2d2f31"/><path d="${spokes(30, 10.500, 13)}" stroke="#c9cbcd" stroke-width="1.200"/><circle cx="20" cy="20" r="10" fill="none" stroke="#b5b7b9" stroke-width="2.200"/><path d="M20 20H29M20 20L15.500 12.500M20 20L15.500 27.500" stroke="#b5b7b9" stroke-width="2.200"/>`],
    teamviewer: [40, 40, '<circle cx="20" cy="20" r="20" fill="#6a6a6a"/><circle cx="20" cy="20" r="17.500" fill="#101010"/><circle cx="20" cy="20" r="11" fill="none" stroke="#fff" stroke-width="2.400"/><path d="M14 20H24M20.500 15.500L25 20 20.500 24.500" fill="none" stroke="#fff" stroke-width="2.300"/>'],
    rtf: [40, 40, '<path d="M5 6.500H35V30.500H5Z" fill="#7cc4ec"/><path d="M7 1H23L32 12V39.500H7Z" fill="#f6f6f6" stroke="#ccc" stroke-width=".4"/><path d="M23 1L25 11 32 13Z" fill="#ddd"/><path d="M9 6H14M9 8H20M9 10H18M9 12H21M9 14H19M11 17H16M11 19H15M11 21H16M9 25H18M9 27H21M9 29H19" stroke="#999" stroke-width=".6"/><text x="14.500" y="37.500" font-family="Open Sans" font-size="6.500" font-weight="bold" fill="#8a8a8a">RTF</text>'],
    download: [40, 40, `<path d="M2 1.500H38V39.500H2Z" fill="#f4f4f4"/><path d="M2 1.500H38V3H2Z" fill="#d6d0cd"/><path d="M14 7H36" stroke="#999" stroke-width=".7" stroke-dasharray="2 1.500"/><path d="M10 9V38H37V9Z" fill="#fff"/><path d="M3 6H5" stroke="#47c" stroke-width="1.200"/><path d="M10.500 13.500H16" stroke="#2a6fe0" stroke-width="1.500"/><path d="M12 18H15M18 18H21M24 18H27M30.500 18H33.500M12 24H15M18 24H21M24 24H27M30.500 24H33.500M12 30H15M18 30H21M24 30H27" stroke="#d9352c" stroke-width="2.400"/><path d="M3.500 9V18" stroke="#999" stroke-width="1.500" stroke-dasharray=".7 1"/><g transform="translate(25 25.500) scale(.36)">${chromeBall}</g>`],
    trashFull: [40, 40, '<path d="M10 7L13 2 17 5 21 1 25 4 28 2 31 8Z" fill="#e8e8e8"/><path d="M12 6L16 8 14 4M21 3L24 7 20 7M27 5L29 8" fill="#444" stroke="#3c8" stroke-width=".7"/><path d="M6 7C10 10 30 10 34 7L31 36C30 40 10 40 9.500 36Z" fill="#dcdcdc" opacity=".93"/><ellipse cx="20" cy="7" rx="14" ry="3" fill="none" stroke="#f1f1f1"/><path d="M12 13L14 34M20 14L19 36M27 13L25 34" stroke="#c6c6c6" stroke-width="1.500"/>']
  };
</script>

{#snippet ic(name, scale = 1)}
  <svg class="ic ico-{name}" width={icons[name][0] * scale} height={icons[name][1] * scale} viewBox="0 0 {icons[name][0]} {icons[name][1]}">{@html icons[name][2]}</svg>
{/snippet}
{#snippet arrow(dir, color = '#ddd', size = 8)}
  <svg class="ic" width={size} height={size} viewBox="0 0 {dir === 'l' || dir === 'r' ? 6 : 8} {dir === 'l' || dir === 'r' ? 8 : 7}"><path d={tri[dir]} fill={color} /></svg>
{/snippet}
{#snippet txt(text, width, cls = '')}<span class="txt {cls}" use:fit={width}>{text}</span>{/snippet}
{#snippet spinner(color = '#999')}
  <div class="spinner"><span>{@render arrow('u', color, 5)}</span><span>{@render arrow('d', color, 5)}</span></div>
{/snippet}
{#snippet combo(color = '#858585', text = '', w = 0)}
  <div class="field combo"><span class="fill">{@render txt(text, w)}</span><span class="drop">{@render arrow('d', color, 6.5)}</span></div>
{/snippet}
{#snippet select(text, w, cls)}
  <div class="select {cls}">{@render txt(text, w, 'shade')}<span class="drop">{@render arrow('d', cls.includes('off') ? '#868686' : '#ddd', 6.5)}</span></div>
{/snippet}
{#snippet option(kind, text, w, cls = '')}
  <div class="option {cls}"><i class={kind}></i>{@render txt(text, w)}</div>
{/snippet}

<div class="screen">
  <header class="menubar">
    <div class="menus">
      {@render ic('apple')}
      {@render txt('InDesign CC', 83, 'strong')}
      {#each menus as [label, w]}{@render txt(label, w)}{/each}
    </div>
    <div class="status">
      {@render ic('shield')}{@render ic('binoculars')}{@render ic('wifi')}
      {@render txt('Mo. 14:04', 63.7)}
      {@render ic('find')}{@render ic('notif')}
    </div>
  </header>

  <section class="window">
    <div class="appbar">
      <div class="lights"><i class="red"></i><i class="yellow"></i><i class="green"></i></div>
      <b class="idmark">Id</b>
      <span class="badge">Br</span><span class="badge st">St</span>
      <span class="zoomval">{@render txt('94,2 %', 38, 'shade')}{@render arrow('d')}</span>
      <i class="sep"></i>
      <span class="pair">{@render ic('viewOpts')}{@render arrow('d', '#ddd', 6.5)}</span>
      <span class="pair">{@render ic('screen')}{@render arrow('d', '#ddd', 6.5)}</span>
      <span class="pair">{@render ic('arrange')}{@render arrow('d', '#ddd', 6.5)}</span>
      {@render ic('gpu')}
      <div class="right">
        <button class="publish">{@render ic('upload')}{@render txt('Publish Online', 83.5, 'shade')}</button>
        <i class="sep"></i>
        <span class="workspace">{@render txt('Grundlagen', 71, 'strong shade')}{@render arrow('d', '#ddd', 5)}</span>
        <i class="sep"></i>
        <span class="stock">{@render ic('stockFind')}{@render txt('Adobe Stock', 60.4)}</span>
      </div>
    </div>

    <div class="control">
      <div class="g g0">
        <i class="dots"></i>{@render ic('proxy')}
        <div class="rows xy">
          <div>{@render txt('X:', 9)}{@render spinner('#828282')}<span class="field pale">{@render txt('141 mm', 39.5)}</span></div>
          <div>{@render txt('Y:', 9)}{@render spinner('#828282')}<span class="field pale">{@render txt('197,5 mm', 49.5)}</span></div>
        </div>
        <div class="rows bh">
          <div>{@render txt('B:', 9.8)}{@render spinner('#828282')}<span class="field"></span></div>
          <div>{@render txt('H:', 11)}{@render spinner('#828282')}<span class="field"></span></div>
        </div>
        {@render ic('unlink')}
      </div>
      <div class="g g1">
        <div class="rows lead">
          <div>{@render ic('scaleX')}{@render spinner('#828282')}{@render combo()}</div>
          <div>{@render ic('scaleY')}{@render spinner('#828282')}{@render combo()}</div>
        </div>
        <span class="pressed tall">{@render ic('chain')}</span>
        <div class="rows lead">
          <div>{@render ic('angle')}{@render spinner('#828282')}{@render combo()}</div>
          <div>{@render ic('shear')}{@render spinner('#828282')}{@render combo()}</div>
        </div>
      </div>
      <div class="g g2">
        <div class="rows gap12">
          <div>{@render ic('rotR')}{@render ic('rotL')}</div>
          <div>{@render ic('flipH')}{@render ic('flipV')}</div>
        </div>
        <span class="pbox">P</span>
      </div>
      <div class="g g3">
        <div class="rows gap12">
          <div><span class="dim">{@render ic('treeUp')}</span>{@render ic('treeLeft')}</div>
          <div><span class="dim">{@render ic('treeDown')}</span>{@render ic('treeRight')}</div>
        </div>
      </div>
      <div class="g g4">
        <div class="rows gap6">
          <div><span class="chip none"></span><span class="mini">{@render arrow('r')}</span></div>
          <div><span class="chip black"></span><span class="mini">{@render arrow('r')}</span></div>
        </div>
      </div>
      <div class="g g5">
        <div class="rows gap2">
          <div>{@render spinner('#ddd')}{@render combo('#ddd', '1 Pt', 17)}</div>
          <div><div class="field combo wide"><span class="fill"><i class="stroke"></i></span><span class="drop">{@render arrow('d', '#ddd', 6.5)}</span></div></div>
        </div>
      </div>
      <div class="g g6">
        <div class="rows">
          <div class="fxrow">{@render ic('corners')}{@render ic('shadow')}<em>fx.</em></div>
          <div class="oprow">{@render ic('opacity')}<div class="field combo"><span class="fill">{@render txt('100 %', 28)}</span><span class="drop">{@render arrow('r')}</span></div></div>
        </div>
      </div>
      <div class="g g7">
        <div class="rows gap9">
          <div><span class="pressed">{@render ic('wrapNone')}</span>{@render ic('wrapBox')}</div>
          <div><span class="slot">{@render ic('wrapShape')}</span>{@render ic('wrapJump')}</div>
        </div>
      </div>
      <div class="g g8">
        <div class="rows">
          <div class="fitrow">{@render ic('fitFrame')}{@render spinner('#ddd')}<span class="field"></span></div>
          <div class="fitsel">{@render select('', 0, '')}</div>
        </div>
      </div>
      <div class="g g9">
        <div class="rows">
          <div class="stylerow">{@render ic('frameStyle')}{@render combo('#ddd', '[Einfacher Grafikrahmen]', 119.5)}</div>
          <div class="clear">{@render ic('clearA')}{@render ic('clearB')}</div>
        </div>
      </div>
      <div class="tail">
        {@render ic('bolt')}<i class="sep"></i>
        <div class="tailicons">{@render ic('gear')}{@render ic('menu')}</div>
      </div>
    </div>

    <div class="workarea">
      <aside class="tools">
        <div class="dockhead lefty">»</div>
        <div class="toolbody">
          <i class="grip"></i>
          {#each tools as [name, h, flag]}
            {#if name === '-'}
              <hr />
            {:else}
              <div class="tool" style:height="{h}px">
                <span class={flag === 'on' ? 'pressed' : ''}>{#if name === 'type'}<b class="tserif">T</b>{:else}{@render ic(name)}{/if}</span>
                {#if flag === 'more'}<i class="corner"></i>{/if}
              </div>
            {/if}
          {/each}
          <svg class="ic" width="28" height="34" viewBox="0 0 28 34">
            <path d="M9 7H19V16H9Z" fill="none" stroke="#808080" stroke-width="4.500" /><path d="M9.500 7.500H18.500V15.500H9.500Z" fill="none" stroke="#000" stroke-width="2" />
            <path d="M.8 1.500H13.200V13.500H.8Z" fill="#fff" stroke="#808080" stroke-width="1.500" /><path d="M1.500 12.500L12.500 2.500" stroke="#f00" stroke-width="2" />
            <path d="M16 2H20V6M20 6L18.500 4.500M20 6L21.500 4.500M16 2L17.500.5M16 2L17.500 3.500" fill="none" stroke="#ccc" />
            <path d="M3.500 22.500H11V30H3.500Z" fill="#111" stroke="#888" /><path d="M.5 20.500H7.500V27H.5Z" fill="#fff" stroke="#222" /><path d="M1 26.500L7 21" stroke="#f00" />
          </svg>
          <div class="applyto"><span class="pressed"><i></i></span><b class="tserif small">T</b></div>
          <div class="bigbtn"><span class="pressed"><i class="nonechip"></i></span><i class="corner"></i></div>
          <div class="bigbtn"><span class="pressed"><i class="modechip"></i></span><i class="corner"></i></div>
        </div>
      </aside>

      <main class="doc">
        <div class="tabbar"><div class="tab"><span class="x">×</span>{@render txt('*Unbenannt-1 @ 94 % [GPU-Vorschau]', 198, 'strong shade')}</div></div>
        <div class="docbody">
          <div class="view">
            <div class="hrow">
              <div class="origin"></div>
              <div class="hruler">
                <div class="track">
                  {#each hMarks as m, i}
                    <div class="hcell" class:partial={i === 0}><svg width={MM10} height="16"><path d={hTicks} stroke="#8a8a8a" stroke-width=".7" /></svg><span>{i === 0 ? m - 100 : m}</span></div>
                  {/each}
                </div>
                <i class="marker"></i>
              </div>
            </div>
            <div class="crow">
              <div class="vruler">
                {#each vMarks as m}
                  <div class="vcell"><svg width="15" height={MM10}><path d={vTicks} stroke="#8a8a8a" stroke-width=".7" /></svg><span>{#each m as d}<i>{d}</i>{/each}</span></div>
                {/each}
              </div>
              <div class="canvas"><div class="page"><div class="margins"></div></div></div>
            </div>
          </div>
          <div class="vscroll">{@render arrow('u', '#ddd', 9)}<i></i>{@render arrow('d', '#ddd', 9)}</div>
        </div>
        <footer class="docfoot">
          <div class="pager">{@render ic('first')}{@render ic('prev')}<span class="pageno">1</span>{@render arrow('d', '#ddd', 7)}{@render ic('next')}{@render ic('last')}</div>
          <div class="preflight">{@render ic('docCircle')}{@render txt('[Grundprofil] (Arb...', 94.7, 'shade')}{@render arrow('d', '#ddd', 7)}<i class="ok"></i>{@render txt('Ohne Fehler', 58.3)}{@render arrow('d', '#ddd', 5)}</div>
          <div class="hscroll">{@render arrow('l', '#ddd', 9)}<i></i>{@render arrow('r', '#ddd', 9)}</div>
          <div class="footend">{@render ic('split')}{@render ic('sizer')}</div>
        </footer>
      </main>

      <div class="docks">
        <div class="dockheads"><span>«</span><span>»</span></div>
        <div class="dockcols">
          <aside class="icons">
            {#each panelGroups as group}
              <div class="pgroup">
                <i class="grip"></i>
                {#each group as [name, label, w]}
                  <div class="pitem"><span>{@render ic(name)}</span>{@render txt(label, w, 'strong shade')}</div>
                {/each}
              </div>
            {/each}
          </aside>
          <aside class="library">
            <div class="libtabs"><div class="libtab"><span class="updown">◇</span>{@render txt('CC Libraries', 68.7, 'strong')}</div>{@render ic('menu')}</div>
            <div class="libtools">
              <div class="libsel"><span class="drop">{@render arrow('d', '#aaa', 6.5)}</span></div>
              <span class="pressed">{@render ic('grid')}</span>{@render ic('list')}
            </div>
            <div class="libsearch"><span class="fill">{@render ic('find', 0.75)}{@render txt('Adobe Stock durchsuchen', 125.500)}</span><span class="drop">{@render arrow('d', '#bbb', 6.5)}</span></div>
            <div class="libbody">
              <span class="cloud">{@render ic('cc')}</span>
              {@render txt('Installieren Sie die Anwendung', 163.4)}
              {@render txt('Creative Cloud,', 81)}
              {@render txt('um Creative Cloud Libraries zu', 164)}
              {@render txt('verwenden.', 60.4)}
              <a href="#get">{@render txt('Jetzt herunterladen!', 123)}</a>
            </div>
            <div class="libfoot">{@render ic('cc', 0.34)}{@render ic('bin')}</div>
          </aside>
        </div>
      </div>
    </div>
  </section>

  <div class="dialog">
    <h1>{@render txt('Drucken', 49.2)}</h1>
    <div class="top">
      {@render txt('Druckvorgabe:', 83.5)}{@render select('[Benutzerdefiniert]', 107.3, '')}
      {@render txt('Drucker:', 48)}{@render select('FarbLaser 2 kostenpflichtig!', 161.2, '')}
      {@render txt('PPD:', 25.3)}{@render select('Canon iPR Server Q2 V2.0', 149, 'off')}
    </div>
    <div class="cols">
      <div class="leftcol">
        <ul>{#each sections as [label, w], i}<li class:active={i === 0}>{@render txt(label, w)}</li>{/each}</ul>
        <div class="thumb"><div>P</div></div>
      </div>
      <div class="rightcol">
        <h2>{@render txt('Allgemein', 57.2)}</h2>
        <div class="copies">
          {@render txt('Exemplare:', 63.6)}<span class="field">1</span>
          {@render option('check', 'Sortieren', 52, 'off')}
          {@render option('check', 'Umgekehrte Reihenfolge', 142.5)}
        </div>
        <div class="box seiten">
          <h3>{@render txt('Seiten', 35.3)}</h3>
          <div class="sgrid">
            {@render txt('Seiten:', 38.4)}
            <div class="line">{@render option('radio on', 'Alle', 21, 'alle')}<div class="nav">{@render ic('first')}{@render ic('prev')}{@render ic('sheets')}{@render ic('next')}{@render ic('last')}</div></div>
            <span></span>
            <div class="line">{@render option('radio', 'Bereich:', 44.6, 'bereich')}<div class="field combo range"><span class="fill">1</span><span class="drop">{@render arrow('d', '#ddd', 6.5)}</span></div></div>
            <span></span>{@render option('radio', 'Aktuelle Seite: A4 V:1', 124)}
            {@render txt('Abfolge:', 48.3)}{@render select('Alle Seiten', 60.2, 'abfolge')}
            <span></span>{@render option('radio on', 'Seiten', 34.5)}
            <span></span>{@render option('radio', 'Druckbögen', 70.3)}
            <span></span>{@render option('check', 'Musterseiten drucken', 124.5)}
          </div>
        </div>
        <div class="box optionen">
          <h3>{@render txt('Optionen', 53)}</h3>
          <div class="ebenen">{@render txt('Ebenen drucken:', 96.4)}{@render select('Sichtbare und druckbare Ebenen', 188.6, 'layersel')}</div>
          <div class="checks">
            {@render option('check', 'Nicht druckende Objekte drucken', 194.9)}
            {@render option('check', 'Leere Seiten drucken', 120.5)}
            {@render option('check', 'Sichtbare Hilfslinien und Grundlinienraster drucken', 297.5)}
          </div>
        </div>
        <div class="box online">
          <h3>{@render txt('Publish Online', 83.3)}</h3>
          <div class="promo">
            {@render ic('devices')}
            <div>
              {@render txt('Veröffentlichen Sie Ihre Dokumente online im Internet', 312.5)}
              {@render option('check', 'Versuchen Sie „Publish Online“ nach dem Drucken', 290.9)}
            </div>
          </div>
        </div>
      </div>
    </div>
    <div class="buttons">
      <button class="focus b1">{@render txt('Seite einrichten...', 101, 'shade')}</button>
      <button class="b2">{@render txt('Drucker...', 56.4, 'shade')}</button>
      <button class="b3">{@render txt('Vorgabe speichern...', 119.5, 'shade')}</button>
      <button class="b4">{@render txt('Abbrechen', 62.3, 'shade')}</button>
      <button class="default b5">{@render txt('Drucken', 48, 'shade')}</button>
    </div>
    <span class="cursor">{@render ic('cursor')}</span>
  </div>

  <nav class="dock">
    {#each dock as name}
      <div class="app">
        {#if adobe[name]}
          <span class="tile" style:color={adobe[name][0]} style:background={adobe[name][1]}>{name}</span>
        {:else}{@render ic(name, 0.95)}{/if}
        {#if running.includes(name)}<i class="dot"></i>{/if}
      </div>
    {/each}
    <i class="divider"></i>
    {#each dockEnd as name}<div class="app">{@render ic(name, 0.97)}</div>{/each}
  </nav>
</div>

<style>
  :global(body) { margin: 0; background: #555; overflow: hidden; }
  .screen {
    zoom: 1.6; position: relative; width: 2560px; height: 1440px; overflow: hidden; box-sizing: border-box;
    background: linear-gradient(#222 0, #222 1387px, #505050 1388px, #8e8e8e 1440px);
    font: 12px/1 'Open Sans', 'Noto Sans', sans-serif; color: #e0e0e0;
  }
  .screen :global(*) { box-sizing: border-box; }
  .ic { display: block; flex: none; overflow: visible; }
  .txt { display: block; width: max-content; white-space: pre; flex: none; line-height: 16px; }
  .strong { font-weight: 700; }
  .shade { text-shadow: 0 -1px 0 #2a2a2a; }
  button { font: inherit; color: inherit; padding: 0; margin: 0; }
  i { font-style: normal; display: block; flex: none; }

  .menubar { height: 22px; background: #e4e4e4; display: flex; justify-content: space-between; align-items: center; padding: 0 22.500px 0 21px; font: 14px/1 'Inter', sans-serif; color: #262626; }
  .menus { display: flex; align-items: center; gap: 18.200px; }
  .menus .ic { margin: -2px 2.500px 0 0; }
  .menus .strong { font-weight: 600; }
  .status { display: flex; align-items: center; gap: 11.500px; }
  .status .txt { margin: 0 6px 0 -1px; }
  .status .ic:last-child { margin-left: 4px; }

  .window { height: 1366px; padding: 2px 1px 1px; background: #202020; border-radius: 5px 5px 0 0; border-top: 1px solid #666; display: flex; flex-direction: column; }
  .appbar { height: 32px; border-top: 1px solid #6c6c6c; border-radius: 5px 5px 0 0; background: linear-gradient(#606060, #484848); display: flex; align-items: center; flex: none; padding-left: 8px; }
  .lights { display: flex; gap: 8.100px; width: 72px; }
  .lights i { width: 12px; height: 12px; border-radius: 50%; }
  .red { background: radial-gradient(circle, #6b0a05 22%, #f0574e 26%); }
  .yellow { background: #f8bd45; }
  .green { background: #5dc74d; }
  .idmark { color: #9c4874; font-weight: 600; font-size: 21px; letter-spacing: -.8px; width: 38.500px; margin-top: -3px; }
  .badge { width: 16px; height: 16px; border: 1.300px solid #ccc; background: #222; font-size: 9.500px; line-height: 13px; text-align: center; letter-spacing: -.3px; margin: -3px 21px 0 0; }
  .st { margin-right: 26px; }
  .zoomval { display: flex; align-items: center; gap: 6px; width: 66px; }
  .sep { width: 2px; height: 20px; background: linear-gradient(90deg, #303030 50%, #5c5c5c 50%); }
  .pair { display: flex; align-items: center; gap: 2px; width: 48px; margin-top: -3px; }
  .sep + .pair { margin-left: 16.500px; }
  .pair + .ic { margin-left: -5px; }
  .right { margin-left: auto; display: flex; align-items: center; padding-right: 15px; }
  .publish { width: 122px; height: 26px; border: 1.300px solid #b0406c; background: linear-gradient(#565656, #464646); box-shadow: inset 0 0 0 1.300px #242424; display: flex; align-items: center; padding-left: 10px; gap: 6px; }
  .right .sep { margin: 0 0 0 5px; }
  .workspace { display: flex; align-items: center; gap: 10px; margin-left: 12px; width: 97px; margin-top: -3px; }
  .right .stock { width: 128px; height: 18px; margin: -1px 0 0 6px; background: #a3a3a3; border: 1.300px solid #2b2b2b; display: flex; align-items: center; gap: 4px; padding-left: 3px; color: #787878; }

  .control { height: 59px; margin-top: 1px; border-top: 1px solid #5f5f5f; background: #494949; display: flex; flex: none; }
  .g { height: 47px; margin-top: 5.500px; display: flex; align-items: center; flex: none; border-right: 1px solid #3b3b3b; box-shadow: 1px 0 0 #525252; }
  .rows { display: flex; flex-direction: column; gap: 7.400px; }
  .rows > div { height: 18.600px; display: flex; align-items: center; gap: 2px; }
  .g0 { width: 312.200px; }
  .dots { width: 2px; height: 20px; margin: 2px 0 0 4.500px; background: repeating-linear-gradient(#111 0 1px, #555 1px 2px); }
  .dots + .ic { margin-left: 19px; width: 19px; }
  .xy { margin-left: 16px; width: 103px; align-items: flex-end; }
  .bh { margin-left: 16px; width: 97px; align-items: flex-end; }
  .bh + .ic { margin-left: 11px; }
  .spinner { width: 17px; height: 18.600px; background: #262626; padding: 1px; display: flex; flex-direction: column; gap: 1px; flex: none; }
  .spinner span { flex: 1; background: linear-gradient(#595959, #4b4b4b); display: flex; align-items: center; justify-content: center; }
  .rows .txt + .spinner { margin-left: 1px; }
  .field { width: 67px; height: 18.600px; background: #a8a8a8; border: 1.300px solid #262626; box-shadow: 0 1px 0 #575757; display: flex; align-items: center; flex: none; color: #0c0c0c; }
  .pale { color: #727272; padding-left: 3px; }
  .combo { background: #555; }
  .combo .fill { flex: 1; height: 100%; background: #a3a3a3; border-right: 1.300px solid #3a3a3a; display: flex; align-items: center; padding-left: 4px; box-shadow: inset 0 0 0 1px #8e8e8e; }
  .combo .drop { width: 16.500px; display: flex; justify-content: center; }
  .g1 { width: 261px; padding-left: 7px; }
  .lead .spinner { margin-left: 3px; }
  .pressed { background: #303030; border: 1px solid #252525; width: 22px; height: 22px; display: flex; align-items: center; justify-content: center; flex: none; box-shadow: 0 1px 0 #575757; }
  .tall { margin: 0 8px 0 7px; }
  .tall + .lead .spinner { margin-left: 4px; }
  .g2 { width: 96.500px; padding-left: 10px; }
  .rows.gap12 > div { gap: 11.500px; }
  .pbox { margin-left: 11px; width: 26px; height: 25px; font: 20px/23px 'Liberation Serif', serif; text-align: center; color: #888;
    background: linear-gradient(#888, #888) 0 0 / 5px 1px, linear-gradient(#888, #888) 0 0 / 1px 5px, linear-gradient(#888, #888) 100% 0 / 5px 1px, linear-gradient(#888, #888) 100% 0 / 1px 5px,
      linear-gradient(#888, #888) 0 100% / 5px 1px, linear-gradient(#888, #888) 0 100% / 1px 5px, linear-gradient(#888, #888) 100% 100% / 5px 1px, linear-gradient(#888, #888) 100% 100% / 1px 5px;
    background-repeat: no-repeat; }
  .g3 { width: 62.700px; padding-left: 10px; color: #ccc; }
  .dim { color: #808080; }
  .g4 { width: 51.600px; padding-left: 5.500px; }
  .rows.gap6 > div { gap: 5.600px; }
  .chip { width: 19px; height: 20px; border: 1.300px solid #777; flex: none; }
  .none { background: linear-gradient(135deg, #fff 45%, #f00 45% 55%, #fff 55%); }
  .black { background: #000; box-shadow: inset 0 0 0 4.500px #000, inset 0 0 0 5.500px #888, inset 0 0 0 9px #333; }
  .mini { width: 15px; height: 18.600px; background: #555; border: 1.300px solid #262626; display: flex; align-items: center; justify-content: center; }
  .g5 { width: 98px; padding-left: 5px; }
  .combo.wide { width: 86px; }
  .stroke { width: 53px; height: 7.500px; background: #000; }
  .g6 { width: 101.700px; padding-left: 8px; }
  .rows > .fxrow { gap: 13.500px; padding-left: 3px; }
  .fxrow em { font: italic 15px/15px 'Liberation Serif', serif; color: #ccc; }
  .rows > .oprow { gap: 8px; }
  .g7 { width: 62.400px; padding-left: 6.500px; }
  .rows.gap9 > div { gap: 9px; }
  .slot { width: 22px; display: flex; justify-content: center; }
  .g8 { width: 118.600px; padding-left: 7px; }
  .fitrow .spinner { margin-left: 3px; }
  .fitsel { padding-left: 20px; }
  .fitsel .select { width: 85px; }
  .g9 { width: 228.600px; padding-left: 14px; }
  .rows > .stylerow { gap: 12px; }
  .stylerow .combo { width: 180px; }
  .rows > .clear { gap: 10px; padding-left: 157px; }
  .tail { margin-left: auto; display: flex; align-items: center; padding: 1px 7px 0 0; }
  .tail .sep { height: 47px; margin: 0 9px; }
  .tailicons { display: flex; flex-direction: column; gap: 17px; }

  .workarea { flex: 1; min-height: 0; margin-top: 1px; display: flex; }
  .dockhead, .dockheads { height: 11px; border-top: 1px solid #454545; background: linear-gradient(#363636, #282828); color: #aaa; font-size: 13px; line-height: 8px; flex: none; }
  .lefty { padding-left: 4px; }
  .tools { width: 38.300px; margin-right: 2.700px; display: flex; flex-direction: column; box-shadow: 1.500px 0 0 #353535; }
  .toolbody { flex: 1; margin-top: 1px; border-top: 1px solid #606060; background: #494949; display: flex; flex-direction: column; align-items: center; }
  .grip { width: 20px; height: 4.500px; background: repeating-linear-gradient(90deg, #0c0c0c 0 1.250px, #484848 1.250px 2.080px); }
  .toolbody .grip { margin: 2.500px 0 6px; flex: none; }
  .tool, .bigbtn { width: 28px; display: flex; align-items: center; justify-content: center; flex: none; position: relative; }
  .tool span { display: flex; align-items: center; justify-content: center; height: 22px; width: 28px; }
  .corner { position: absolute; right: 1px; bottom: 1px; width: 4px; height: 4px; background: linear-gradient(to top left, #ddd 50%, transparent 50%); }
  .toolbody hr { width: 36px; height: 1px; border: 0; background: #3c3c3c; margin: 0; box-shadow: 0 1px 0 #515151; flex: none; }
  .tserif { font: 18px/18px 'Liberation Serif', serif; color: #ccc; }
  .tserif.small { font-weight: 700; font-size: 12px; }
  .toolbody > .ic { margin: 4px 0 0 3px; }
  .applyto { display: flex; width: 28px; justify-content: space-between; align-items: center; height: 12px; margin: 1px 0 6.500px; }
  .applyto .pressed { width: 14px; height: 12px; margin-left: -2px; }
  .applyto .tserif { margin-right: 1.500px; }
  .applyto .pressed i { width: 8px; height: 7px; border: 1.300px solid #ccc; }
  .bigbtn { height: 22px; margin-bottom: 7.500px; }
  .bigbtn .pressed { width: 28px; }
  .nonechip { width: 16px; height: 14px; border: 1.300px solid #888; background: linear-gradient(139deg, #fff 44%, #f00 44% 56%, #fff 56%); }
  .modechip { width: 11px; height: 11px; border: 1.300px solid #aaa; border-top-width: 2px; background: linear-gradient(#555 35%, #fff 35% 75%, #555 75%); }

  .doc { width: 2154px; display: flex; flex-direction: column; flex: none; }
  .tabbar { height: 28px; background: linear-gradient(#353535, #2b2b2b); border-top: 1px solid #474747; flex: none; display: flex; }
  .tab { width: 243.600px; margin-top: -1px; height: 28px; background: #494949; border-top: 1px solid #5f5f5f; border-right: 1px solid #222; display: flex; align-items: center; padding: 1.500px 0 0 14px; font-size: 11px; color: #e6e6e6; }
  .x { font-size: 14px; width: 17px; color: #ccc; }
  .docbody { flex: 1; min-height: 0; display: flex; }
  .view { flex: 1; min-width: 0; display: flex; flex-direction: column; }
  .hrow { height: 17px; display: flex; background: #1f1f1f; border-bottom: 1px solid #828282; flex: none; }
  .origin { width: 16px; background: linear-gradient(90deg, transparent 4px, #777 4px 5px, transparent 5px), linear-gradient(transparent 4.500px, #777 4.500px 5.500px, transparent 5.500px); }
  .hruler { flex: 1; overflow: hidden; position: relative; }
  .track { display: flex; margin-left: -6.100px; width: max-content; }
  .hcell { width: 40.250px; height: 16px; display: flex; flex: none; font-size: 10px; line-height: 15px; color: #d0d0d0; letter-spacing: .45px; }
  .hcell svg { margin-right: -40.250px; flex: none; }
  .hcell span { padding-left: 2.500px; }
  .hcell.partial span { padding-left: 8.500px; }
  .marker { position: absolute; left: 1204.300px; top: 1px; height: 15px; border-left: 1px dashed #eee; }
  .crow { flex: 1; min-height: 0; display: flex; background: #606060; }
  .vruler { width: 16px; height: 1207px; overflow: hidden; background: #1f1f1f; border-right: 1px solid #828282; padding-top: 6.400px; }
  .vcell { height: 40.250px; display: flex; font-size: 10px; color: #d0d0d0; }
  .vcell svg { margin-right: -15px; flex: none; }
  .vcell span { width: 10px; padding-top: 3.200px; text-align: center; }
  .vcell span i { line-height: 9px; }
  .canvas { flex: 1; position: relative; overflow: hidden; }
  .page { position: absolute; left: 638.600px; top: 6.800px; width: 844.800px; height: 1195px; background: #fff; box-shadow: 0 0 0 .6px #000, 2px 2px 0 #000; padding: 50.700px 51px 51.100px 50.500px; }
  .margins { height: 100%; border: 1.300px solid #ea80f4; }
  .vscroll { width: 16px; background: #343434; border: 1px solid #222; display: flex; flex-direction: column; align-items: center; justify-content: space-between; padding: 4px 0 3px; }
  .vscroll i { width: 14px; height: 974px; margin: 0 0 1px; background: #8d8d8d; }
  .docfoot { height: 16.500px; display: flex; background: #494949; flex: none; }
  .pager { width: 200px; display: flex; align-items: center; padding-left: 12px; }
  .pager .ic { margin-right: 13.500px; }
  .pageno { margin: 0 64px 0 5px; }
  .pager :nth-child(4) { margin-right: 21.500px; }
  .preflight { width: 259.500px; display: flex; align-items: center; padding-top: 1px; }
  .preflight .ic { margin-right: 14.500px; }
  .preflight .txt + .ic { margin: 0 17px 0 5px; }
  .preflight .ok + .txt + .ic { margin: 0 0 0 12px; }
  .ok { width: 10.500px; height: 11px; border-radius: 50%; background: #6cac3c; margin-right: 5.500px; box-shadow: 0 -1px 0 #333; }
  .hscroll { width: 1656.500px; background: #343434; border: 1px solid #242424; display: flex; align-items: center; padding: 0 3px; justify-content: space-between; }
  .hscroll i { width: 1013px; height: 100%; background: #8b8b8b; margin-left: 510px; margin-right: auto; }
  .footend { display: flex; align-items: center; gap: 6px; padding-left: 5px; }

  .docks { flex: 1; margin-left: 2px; display: flex; flex-direction: column; }
  .dockheads { display: flex; justify-content: space-between; padding: 0 5px 0 106px; }
  .dockheads span:first-child { width: 20px; }
  .dockcols { flex: 1; margin-top: 1px; display: flex; min-height: 0; }
  .icons { width: 118px; background: #494949; box-shadow: 1px 0 0 #222, 2px 0 0 #333; margin-right: 3.200px; flex: none; }
  .pgroup { border-top: 1px solid #5f5f5f; border-bottom: 1.300px solid #222; padding-bottom: 1.300px; }
  .pgroup .grip { margin: 3px 0 1.500px 49px; }
  .pitem { height: 28.100px; display: flex; align-items: center; padding-left: 10px; }
  .pitem > span:first-child { width: 27.300px; display: flex; }
  .pitem :global(.ico-palette) { margin-left: -1.500px; }
  .library { flex: 1; background: #464646; display: flex; flex-direction: column; min-width: 0; }
  .libtabs { height: 28px; display: flex; justify-content: space-between; align-items: center; padding-right: 6px; background: linear-gradient(#353535, #2b2b2b); border-bottom: 1.300px solid #5a5a5a; flex: none; }
  .libtab { width: 98px; height: 28px; background: #494949; border-top: 1px solid #5f5f5f; display: flex; align-items: center; padding-left: 7px; gap: 3px; margin-bottom: -2px; }
  .updown { font-size: 9px; width: 8px; }
  .libtools { display: flex; align-items: center; padding: 5px 0 0 8px; height: 22px; background: #494949; flex: none; }
  .libsel { width: 171.500px; height: 17px; border: 1px solid #333; background: linear-gradient(#555, #4a4a4a); display: flex; align-items: center; justify-content: flex-end; margin-right: 7.500px; }
  .libsel .drop, .select .drop { height: 12px; display: flex; align-items: center; justify-content: center; border-left: 1px solid #3a3a3a; box-shadow: inset 1px 0 0 #666; width: 16px; flex: none; }
  .libtools .pressed { width: 21px; height: 17px; margin-right: 7px; }
  .libsearch { height: 35.500px; padding: 5.500px 7.500px 6px 8px; background: #494949; border-bottom: 1.300px solid #262626; display: flex; color: #505050; flex: none; }
  .libsearch .fill { flex: 1; background: #747474; border: 1.300px solid #2b2b2b; border-right: 0; display: flex; align-items: center; padding-left: 4px; gap: 4px; }
  .libsearch .drop { width: 21px; display: flex; align-items: center; justify-content: center; border: 1.300px solid #2b2b2b; }
  .libbody { flex: 1; display: flex; flex-direction: column; align-items: center; color: #9d9d9d; padding-top: 510.500px; }
  .libbody > .txt { line-height: 15px; height: 15px; }
  .cloud { color: #6e6e6e; margin-bottom: 5.500px; height: 38px; }
  .libbody a { color: #fff; font-weight: 600; margin-top: 15px; border-bottom: 1px solid #fff; text-decoration: none; height: 14px; }
  .libbody a .txt { line-height: 14.500px; height: 13px; }
  .libfoot { height: 23.500px; border-top: 1.300px solid #5c5c5c; background: #494949; display: flex; justify-content: flex-end; align-items: center; gap: 10px; padding-right: 11.500px; flex: none; color: #c4c4c4; }

  .dialog { position: absolute; left: 811px; top: 289.600px; width: 633px; height: 696.400px; background: #494949; border-radius: 4px; box-shadow: 0 0 1px #0007, 0 24px 40px 4px #0007, 0 4px 36px #0004; -webkit-text-stroke: .15px; }
  h1 { margin: 0; height: 22px; border-radius: 4px 4px 0 0; background: linear-gradient(#ebebeb, #cfcfcf); border-bottom: 1px solid #b3b3b3; display: flex; align-items: center; justify-content: center; color: #2a2a2a; font: 13px/1 'Inter', sans-serif; padding-top: 2.500px; -webkit-text-stroke: 0; }
  .top { display: grid; grid-template-columns: 209.500px 290.500px; grid-auto-rows: 18.500px; gap: 7.500px 6.800px; padding-top: 16.500px; align-items: center; }
  .top > .txt, .sgrid > .txt, .ebenen > .txt { justify-self: end; margin-top: 2px; }
  .select { height: 18.600px; border: 1.300px solid #262626; background: linear-gradient(#626262, #515151); box-shadow: 0 1px 0 #575757, inset 0 1px 0 #6e6e6e; display: flex; align-items: center; justify-content: space-between; padding-left: 2.300px; }
  .select .txt { margin-top: 1.500px; }
  .select.off { background: #505050; color: #828282; box-shadow: 0 1px 0 #575757; }
  .select.off .shade { text-shadow: 0 -1px 0 #3c3c3c; }
  .select.off .drop { border-color: #464646; box-shadow: none; }
  .cols { display: flex; gap: 9.300px; padding: 15.300px 0 0 13.800px; }
  .leftcol { width: 142px; }
  ul { list-style: none; margin: 0; padding: 0; height: 199.700px; border: 1.300px solid #262626; }
  li { height: 22px; border-bottom: 1px solid #2e2e2e; padding-left: 4.800px; display: flex; align-items: center; font-size: 10.500px; padding-top: 2px; }
  li.active { background: #4b5464; }
  .thumb { width: 139.500px; height: 169px; margin: 9.600px 0 0 1.500px; background: #999; border: 1px solid #444; border-bottom-color: #606060; display: flex; align-items: center; justify-content: center; }
  .thumb div { width: 64px; height: 91.500px; background: #f2f2f2; border: 1px solid #5b55e0; color: #7b7bf9; font: 62px/90px 'DejaVu Serif', serif; -webkit-text-stroke: 1px; display: flex; justify-content: center; transform: none; }
  .rightcol { width: 453px; }
  h2 { margin: 0; font: inherit; height: 22.500px; padding-top: 5px; border-bottom: 1px solid #3a3a3a; box-shadow: 0 1px 0 #555; }
  .copies { display: flex; align-items: center; height: 18.500px; margin: 16.700px 0 28px 27.500px; }
  .copies > .txt { margin-top: 2px; }
  .copies .field { width: 61px; margin-left: 5.500px; padding-left: 3px; }
  .copies .option { margin-left: 12px; }
  .copies .option + .option { margin-left: 22.500px; }
  .option { display: flex; align-items: center; }
  .option .txt { margin-top: 2px; }
  .option.off { color: #7d7d7d; }
  .check, .radio { width: 12px; height: 12px; border: 1.300px solid #282828; background: linear-gradient(#5e5e5e, #4e4e4e); margin-right: 4px; box-shadow: 0 1px 0 #565656; }
  .off .check { border-color: #363636; background: #4c4c4c; }
  .radio { width: 11px; height: 12px; border-radius: 50%; margin-right: 4.600px; }
  .radio.on { background: radial-gradient(circle, #e0e0e0 24%, #555 32%); }
  .box { border: 1.300px solid #2a2a2a; box-shadow: 0 0 0 1px #555, inset 0 1px 0 #555; margin-left: 1px; width: 451px; }
  h3 { margin: -10.500px 0 0 7.700px; font: inherit; padding: 1.300px 4px 0; height: 18.500px; background: #494949; width: max-content; position: relative; }
  .seiten { height: 183px; }
  .sgrid { display: grid; grid-template-columns: 149.500px 1fr; grid-template-rows: 20.500px 21px 21px 30.500px 23px 25px 26px; column-gap: 6.700px; align-items: center; padding-top: .6px; }
  .line { display: flex; align-items: center; }
  .alle { width: 113px; }
  .bereich { width: 65.500px; }
  .nav { display: flex; align-items: center; gap: 11.200px; margin-top: -8px; }
  .nav :global(.ico-sheets) { margin: 0 -2.500px; }
  .range { width: 207.500px; }
  .abfolge { width: 163.500px; }
  .optionen { height: 113px; margin-top: 28px; }
  .ebenen { display: flex; justify-content: flex-end; align-items: center; gap: 5.500px; height: 22px; padding-right: 19px; }
  .layersel { width: 233.700px; }
  .checks { padding: 3px 0 0 8.500px; }
  .checks .option { height: 24px; }
  .online { height: 77.500px; margin-top: 27.800px; }
  .promo { display: flex; gap: 10.500px; padding: 5.500px 0 0 12.700px; }
  .promo > div > .txt { line-height: 24px; height: 23px; }
  .promo .option { height: 24px; }
  .promo .option .check { margin-right: 4.500px; }
  .buttons { display: flex; padding: 21px 14px 0 15px; align-items: center; height: 42.300px; }
  .buttons button { height: 18.800px; border: 1.300px solid #262626; background: linear-gradient(#626262, #525252); box-shadow: inset 0 1px 0 #6e6e6e, 0 1px 0 #575757; display: flex; align-items: center; justify-content: center; padding-top: 2px; flex: none; }
  .buttons .focus { width: 119.500px; height: 18.800px; outline: 1.300px solid #e28c36; margin-left: 1px; }
  .b2 { width: 88px; margin-left: 12.700px; }
  .b3 { width: 139.500px; margin-left: 11.500px; }
  .b4 { width: 88px; margin-left: 42px; }
  .buttons .default { width: 90px; height: 21px; border-width: 2px; margin-left: 11px; }
  .cursor { position: absolute; left: 129.500px; top: 673px; }

  .dock { position: absolute; left: 536px; top: 1388px; width: 1488px; height: 56px; border-radius: 6px 6px 0 0; background: linear-gradient(#949393, #a39fa2); display: flex; padding: 3.500px 0 0 3px; }
  .app { width: 43px; height: 49px; display: flex; flex-direction: column; align-items: center; flex: none; }
  .tile { width: 38.300px; height: 37.500px; margin-top: 1px; border: 1.900px solid; font-size: 23px; line-height: 32px; text-align: center; letter-spacing: -1px; flex: none; box-shadow: 0 .5px 1px #0006; }
  .app > .ic { margin-top: 1px; }
  .dot { width: 4px; height: 4px; border-radius: 50%; background: #1d1d1d; margin-top: 4px; }
  .divider { width: 1px; height: 38px; background: #6d6a6c; margin: 3px 9px 0 10px; }
</style>
